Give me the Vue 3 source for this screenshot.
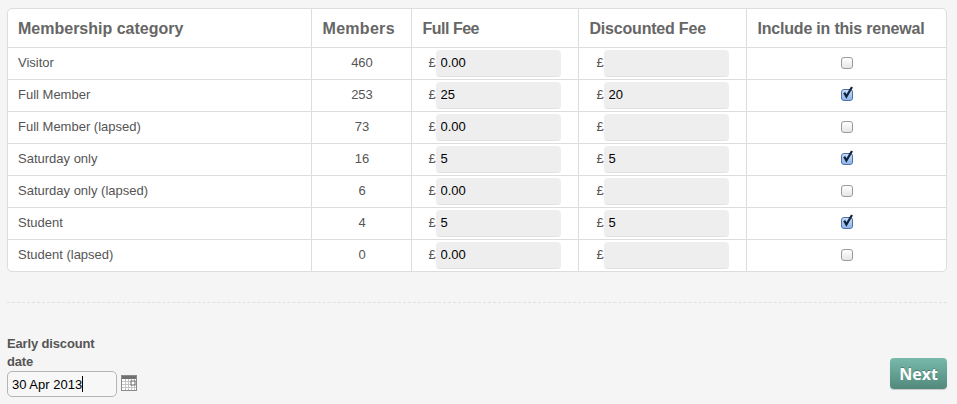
<script setup>
const rows = [
  { name: 'Visitor', members: 460, full: '0.00', disc: '', on: false },
  { name: 'Full Member', members: 253, full: '25', disc: '20', on: true },
  { name: 'Full Member (lapsed)', members: 73, full: '0.00', disc: '', on: false },
  { name: 'Saturday only', members: 16, full: '5', disc: '5', on: true },
  { name: 'Saturday only (lapsed)', members: 6, full: '0.00', disc: '', on: false },
  { name: 'Student', members: 4, full: '5', disc: '5', on: true },
  { name: 'Student (lapsed)', members: 0, full: '0.00', disc: '', on: false },
]
</script>

<template>
  <main class="page">
    <div class="card">
      <table>
        <colgroup>
          <col class="c1" />
          <col class="c2" />
          <col class="c3" />
          <col class="c4" />
          <col />
        </colgroup>
        <thead>
          <tr>
            <th>Membership category</th>
            <th class="wide">Members</th>
            <th class="tight">Full Fee</th>
            <th class="snug">Discounted Fee</th>
            <th class="snug">Include in this renewal</th>
          </tr>
        </thead>
        <tbody>
          <tr v-for="r in rows" :key="r.name">
            <td class="text">{{ r.name }}</td>
            <td class="text center">{{ r.members }}</td>
            <td>
              <div class="fee"><span class="pound">£</span><input class="fee-input" :value="r.full" /></div>
            </td>
            <td>
              <div class="fee disc"><span class="pound">£</span><input class="fee-input" :value="r.disc" /></div>
            </td>
            <td class="text center">
              <span class="check" :class="{ on: r.on }">
                <svg v-if="r.on" width="13" height="14" viewBox="0 0 13 14">
                  <path d="M3.2 6.6 L5.4 10.6 L11 1" fill="none" stroke="#10233f" stroke-width="2.2" />
                </svg>
              </span>
            </td>
          </tr>
        </tbody>
      </table>
    </div>

    <hr class="rule" />

    <div class="footer">
      <div class="date-block">
        <label class="date-label">Early discount<br />date</label>
        <div class="date-row">
          <div class="date-input">30 Apr 2013<span class="caret"></span></div>
          <svg class="cal" width="16" height="16" viewBox="0 0 16 16">
            <rect x="0.5" y="0.5" width="15" height="15" fill="#fff" stroke="#8a8a8a" />
            <rect x="1" y="1" width="14" height="3" fill="#707070" />
            <path d="M1 6.5H15M1 9.5H15M1 12.5H15M4.5 4V15M7.5 4V15M10.5 4V15M13.5 4V15" stroke="#c4c4c4" fill="none" />
            <rect x="10" y="6" width="4" height="4" fill="#fff" stroke="#666" />
          </svg>
        </div>
      </div>
      <button class="next" type="button">Next</button>
    </div>
  </main>
</template>

<style>
html, body { margin: 0; background: #f5f5f5; }
</style>

<style scoped>
.page {
  box-sizing: border-box;
  width: 957px;
  height: 404px;
  padding: 8px 10px 0 7px;
  overflow: hidden;
  background: #f5f5f5;
  font-family: "Liberation Sans", Arial, sans-serif;
  color: #555;
}
.card {
  width: 940px;
  box-sizing: border-box;
  background: #fff;
  border: 1px solid #ddd;
  border-radius: 5px;
  overflow: hidden;
}
table {
  width: 100%;
  border-collapse: collapse;
  table-layout: fixed;
}
.c1 { width: 303px; }
.c2 { width: 100px; }
.c3 { width: 167px; }
.c4 { width: 168px; }
th {
  height: 38px;
  padding: 2px 9px 0 11px;
  box-sizing: border-box;
  text-align: left;
  font-size: 16px;
  font-weight: 700;
  color: #666;
  border-left: 1px solid #ddd;
  white-space: nowrap;
}
th.wide { letter-spacing: 0.3px; }
th.tight { letter-spacing: -0.5px; }
th.snug { letter-spacing: -0.2px; }
td {
  height: 32px;
  padding: 0 9px 0 11px;
  box-sizing: border-box;
  font-size: 13px;
  color: #555;
  border-left: 1px solid #ddd;
  border-top: 1px solid #ddd;
}
td.text { padding-bottom: 2px; }
th:first-child, td:first-child { border-left: 0; padding-left: 10px; }
.center { text-align: center; }
.fee {
  display: flex;
  align-items: center;
  padding-left: 6px;
}
.fee.disc { padding-left: 7px; }
.pound {
  width: 7px;
  padding-bottom: 2px;
  font-size: 13px;
  color: #555;
}
.fee-input {
  box-sizing: border-box;
  width: 125px;
  height: 27px;
  margin: 0;
  padding: 0 5px;
  border: 0;
  border-bottom: 1px solid #e2e2e2;
  border-radius: 4px;
  background: #eee;
  font: 13px "Liberation Sans", Arial, sans-serif;
  color: #000;
  outline: none;
}
.check {
  display: inline-block;
  box-sizing: border-box;
  width: 12px;
  height: 12px;
  vertical-align: middle;
  position: relative;
  border: 1px solid #9a9a9a;
  border-radius: 3px;
  background: linear-gradient(#fff, #e6e6e6);
}
.check.on {
  border-color: #5170a8;
  background: linear-gradient(#c7dcf7, #8fb6ea);
}
.check svg {
  position: absolute;
  left: -1px;
  top: -4px;
}
.rule {
  width: 940px;
  height: 0;
  margin: 30px 0 0;
  border: 0;
  border-top: 1px dashed #e0e0e0;
}
.footer {
  display: flex;
  justify-content: space-between;
  align-items: flex-end;
  margin-top: 32px;
}
.date-label {
  display: block;
  font-size: 13px;
  line-height: 18px;
  font-weight: 700;
  letter-spacing: -0.15px;
  color: #555;
}
.date-row {
  display: flex;
  align-items: center;
  gap: 4px;
}
.date-input {
  box-sizing: border-box;
  width: 110px;
  height: 26px;
  padding: 0 4px;
  line-height: 25px;
  background: #f7f7f7;
  border: 1px solid #b5b5b5;
  border-radius: 5px;
  font-size: 13px;
  color: #000;
}
.caret {
  display: inline-block;
  width: 1px;
  height: 16px;
  background: #000;
  vertical-align: -3px;
}
.cal { margin-top: -2px; }
.next {
  box-sizing: border-box;
  width: 57px;
  height: 31px;
  margin-bottom: 8px;
  padding: 0;
  border: 0;
  border-radius: 4px;
  background: linear-gradient(#78b9ab, #51897b);
  box-shadow: 0 1px 1px #c9c9c9;
  color: #fff;
  font: 700 16px "Open Sans", "Noto Sans", sans-serif;
  text-shadow: 0 -1px 0 rgba(0, 0, 0, 0.25);
}
</style>
